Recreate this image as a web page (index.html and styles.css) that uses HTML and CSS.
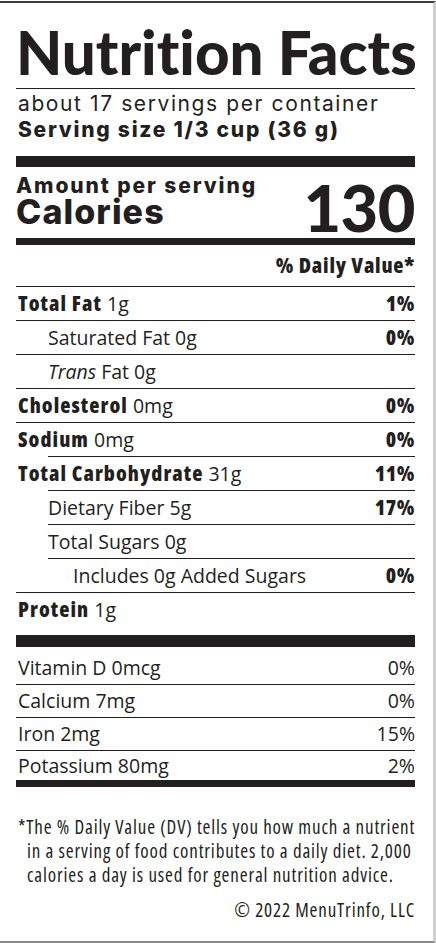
FILE: index.html
```html
<!DOCTYPE html>
<html>
<head>
<meta charset="utf-8">
<title>Nutrition Facts</title>
<link rel="stylesheet" href="styles.css">
</head>
<body>
<div class="frame">
  <div class="label">
    <h1 class="title">Nutrition Facts</h1>
    <div class="serving">
      <div class="servings-per">about 17 servings per container</div>
      <div class="serving-size">Serving size 1/3 cup (36 g)</div>
    </div>
    <div class="bar bar-lg"></div>
    <div class="cal">
      <div class="cal-left">
        <div class="amount">Amount per serving</div>
        <div class="calories">Calories</div>
      </div>
      <div class="cal-num">130</div>
    </div>
    <div class="bar bar-md"></div>
    <div class="dv-head">% Daily Value*</div>
    <div class="row"><span><b>Total Fat</b> 1g</span><b>1%</b></div>
    <div class="row ind1"><span>Saturated Fat 0g</span><b>0%</b></div>
    <div class="row ind1"><span><i>Trans</i> Fat 0g</span></div>
    <div class="row"><span><b>Cholesterol</b> 0mg</span><b>0%</b></div>
    <div class="row short"><span><b>Sodium</b> 0mg</span><b>0%</b></div>
    <div class="row short"><span><b>Total Carbohydrate</b> 31g</span><b>11%</b></div>
    <div class="row ind1 short"><span>Dietary Fiber 5g</span><b>17%</b></div>
    <div class="row ind1 short"><span>Total Sugars 0g</span></div>
    <div class="row ind2"><span>Includes 0g Added Sugars</span><b>0%</b></div>
    <div class="row last"><span><b>Protein</b> 1g</span></div>
    <div class="bar bar-lg2"></div>
    <div class="vits">
      <div class="vrow"><span>Vitamin D 0mcg</span><span>0%</span></div>
      <div class="vrow"><span>Calcium 7mg</span><span>0%</span></div>
      <div class="vrow"><span>Iron 2mg</span><span>15%</span></div>
      <div class="vrow last"><span>Potassium 80mg</span><span>2%</span></div>
    </div>
    <div class="bar bar-md"></div>
    <p class="foot">*The % Daily Value (DV) tells you how much a nutrient<br>in a serving of food contributes to a daily diet. 2,000<br>calories a day is used for general nutrition advice.</p>
    <div class="copy">© 2022 MenuTrinfo, LLC</div>
  </div>
</div>
</body>
</html>
```
FILE: styles.css
```css
html, body {
  margin: 0;
  padding: 0;
  background: #fff;
}
body {
  width: 436px;
  height: 943px;
  overflow: hidden;
  color: #231f20;
}
.frame {
  margin-top: 1px;
  width: 433px;
  height: 938px;
  border-top: 2px solid #3a3a3a;
  border-right: 3px solid #cfcfcf;
  border-bottom: 2px solid #8a8a8a;
}
.label {
  padding: 0 18px 0 16px;
}
.title {
  margin: 0;
  padding-top: 19px;
  padding-bottom: 6px;
  border-bottom: 1px solid #231f20;
  font-family: Lato, sans-serif;
  font-weight: 900;
  font-size: 60px;
  line-height: 60px;
  font-variant-ligatures: none;
  white-space: nowrap;
}
.serving {
  padding-top: 2px;
  padding-left: 2px;
  font-family: Inter, sans-serif;
  font-size: 21px;
  line-height: 26px;
  white-space: nowrap;
}
.servings-per {
  font-weight: 400;
  letter-spacing: 1.6px;
}
.serving-size {
  font-weight: 800;
  letter-spacing: 1.75px;
}
.bar {
  background: #231f20;
}
.bar-lg {
  margin-top: 13px;
  height: 11px;
}
.bar-md {
  height: 7px;
}
.bar-lg2 {
  margin-top: 9px;
  height: 12px;
}
.cal {
  height: 71px;
  display: flex;
  justify-content: space-between;
  align-items: flex-end;
  font-weight: 900;
}
.cal-left {
  margin-bottom: 10px;
  font-family: Inter, sans-serif;
  font-weight: 800;
  white-space: nowrap;
}
.amount {
  font-size: 21px;
  line-height: 20px;
  letter-spacing: 1.9px;
}
.calories {
  font-size: 34px;
  line-height: 32px;
  letter-spacing: 1.1px;
}
.cal-num {
  font-family: Lato, sans-serif;
  font-size: 65px;
  line-height: 62px;
  letter-spacing: -0.5px;
}
.dv-head,
.row,
.vrow,
.foot,
.copy {
  font-family: "Open Sans", sans-serif;
}
.dv-head {
  padding: 6px 0 7px;
  border-bottom: 1px solid #231f20;
  text-align: right;
  font-size: 21px;
  line-height: 28px;
  font-weight: 800;
  font-stretch: 75%;
  letter-spacing: 0.8px;
}
.row {
  display: flex;
  justify-content: space-between;
  align-items: baseline;
  padding-left: 2px;
  font-size: 19.5px;
  line-height: 33px;
  border-bottom: 1px solid #231f20;
  white-space: nowrap;
}
.row b {
  font-weight: 800;
  font-size: 21px;
  font-stretch: 75%;
  letter-spacing: 1.05px;
}
.row > b {
  letter-spacing: 0.6px;
}
.row.ind1 {
  padding-left: 32px;
}
.row.ind2 {
  padding-left: 57px;
}
.row.short {
  border-bottom: 0;
  padding-bottom: 1px;
  background: linear-gradient(#231f20, #231f20) no-repeat 32px 100% / calc(100% - 32px) 1px;
}
.row.last {
  border-bottom: 0;
}
.vits {
  padding-top: 5px;
}
.vrow {
  display: flex;
  justify-content: space-between;
  padding-left: 2px;
  font-size: 19.5px;
  line-height: 32px;
  border-bottom: 1px solid #231f20;
}
.vrow.last {
  border-bottom: 0;
  line-height: 29px;
}
.foot {
  margin: 28px 0 0;
  padding-left: 11px;
  text-indent: -9px;
  font-size: 19px;
  font-stretch: 75%;
  letter-spacing: 0.85px;
  line-height: 24px;
  white-space: nowrap;
}
.copy {
  margin-top: 11px;
  text-align: right;
  font-size: 19px;
  font-stretch: 75%;
  letter-spacing: 0.85px;
  line-height: 24px;
}
```
